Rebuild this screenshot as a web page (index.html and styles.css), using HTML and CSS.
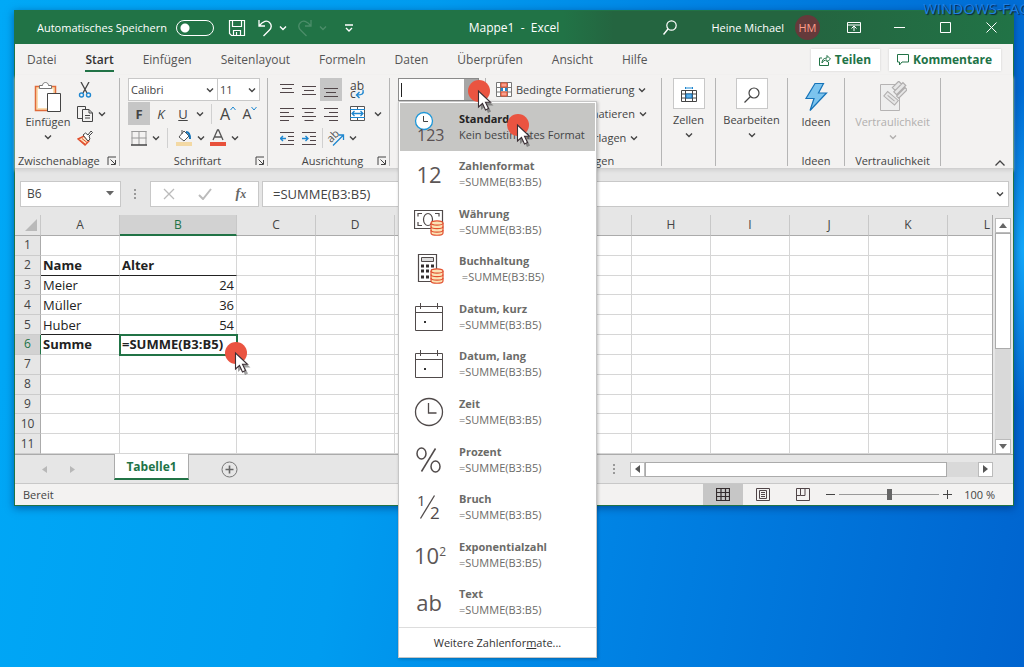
FILE: index.html
```html
<!DOCTYPE html>
<html lang="de">
	<head>
		<meta charset="utf-8">
		<title>Mappe1 - Excel</title>
		<link rel="stylesheet" href="styles.css">
	</head>
	<body>
		<svg class="defs" width="0" height="0">
			<symbol id="chev" viewBox="0 0 8 6"><path d="M1 1.500 4 4.500 7 1.500" fill="none" stroke="currentColor" stroke-width="1.400"/></symbol>
			<symbol id="launch" viewBox="0 0 10 10"><path d="M1 9V1h8M3.500 3.500 8 8M8.500 4v4.500H4" fill="none" stroke="currentColor"/></symbol>
			<symbol id="pointer" viewBox="0 0 28 36">
				<circle cx="11" cy="11" r="11" fill="#ea5441"/>
				<path d="M11 12v16l4-3.500 3 6.500 3-1.500-3-6h5.500z" fill="#444" opacity=".5" transform="translate(2 2)"/>
				<path d="M10.500 11v16l4-3.500 3 6.500 3-1.500-3-6.200h5z" fill="#fff" stroke="#3b2f35" stroke-width="1.100"/>
			</symbol>
			<symbol id="coins" viewBox="0 0 14 16">
				<g fill="#fbe3b5" stroke="#e2502f" stroke-width="1.200">
					<path d="M1 3v10c0 3 12 3 12 0V3"/>
					<ellipse cx="7" cy="3" rx="6" ry="2.200"/>
					<path d="M1 6.500c0 2.800 12 2.800 12 0M1 10c0 2.800 12 2.800 12 0" fill="none"/>
				</g>
			</symbol>
			<symbol id="cal" viewBox="0 0 30 30"><path d="M1.500 4.500h27v24h-27zM1.500 10.500h27M6.500 1v6M23.500 1v6" fill="none" stroke="#504a4a"/><path d="M10 19h2v2h-2z" fill="#333"/></symbol>
		</svg>

		<div class="watermark">WINDOWS-FAQ</div>
		<div class="window">
			<div class="titlebar">
				<div class="title-left">
					<label class="autosave"><span>Automatisches Speichern</span><input type="checkbox"></label>
					<button class="tbtn" aria-label="Speichern"><svg width="18" height="18"><path d="M1.500 1.500h15v15h-13l-2-2zM4.500 1.500v6h9v-6M5.500 16.500v-5h7v5M8.500 13v3" fill="none" stroke="currentColor" stroke-width="1.200"/></svg></button>
					<button class="tbtn undo" aria-label="Rückgängig"><svg width="16" height="18"><path d="M2 1v6h6M2 7C6 2 10 1 12.500 3.500S14.500 9 12 11.500L6.500 17" fill="none" stroke="currentColor" stroke-width="1.300"/></svg><svg width="8" height="6"><use href="#chev"/></svg></button>
					<button class="tbtn redo" aria-label="Wiederholen"><svg width="16" height="18"><path d="M14 1v6H8M14 7C10 2 6 1 3.500 3.500S1.500 9 4 11.500L9.500 17" fill="none" stroke="currentColor" stroke-width="1.300"/></svg><svg width="8" height="6"><use href="#chev"/></svg></button>
					<button class="tbtn customize" aria-label="Anpassen"><svg width="8" height="8"><path d="M0 1h8M1 4l3 3 3-3" fill="none" stroke="currentColor" stroke-width="1.300"/></svg></button>
				</div>
				<div class="title">Mappe1&nbsp; -&nbsp; Excel</div>
				<div class="title-right">
					<button class="tbtn search" aria-label="Suchen"><svg width="14" height="15"><circle cx="8.500" cy="5.500" r="4.700" fill="none" stroke="currentColor" stroke-width="1.200"/><path d="M5 9 .500 14.500" stroke="currentColor" stroke-width="1.400"/></svg></button>
					<span>Heine Michael</span>
					<span class="avatar">HM</span>
					<button class="tbtn ribbon-opt" aria-label="Menüband"><svg width="14" height="11"><path d="M.500.500h13v10H.500zM.500 3h13M7 9V4.500M4.500 6.500 7 4l2.500 2.500" fill="none" stroke="currentColor"/></svg></button>
					<button class="wbtn" aria-label="Minimieren"><svg width="11" height="11"><path d="M0 5.500h11" stroke="currentColor"/></svg></button>
					<button class="wbtn" aria-label="Maximieren"><svg width="11" height="11"><path d="M.500.500h10v10H.500z" fill="none" stroke="currentColor"/></svg></button>
					<button class="wbtn" aria-label="Schließen"><svg width="11" height="11"><path d="M.500.500l10 10M10.500.500l-10 10" stroke="currentColor"/></svg></button>
				</div>
			</div>

			<nav class="tabs">
				<a href="#">Datei</a>
				<a href="#" class="active">Start</a>
				<a href="#">Einfügen</a>
				<a href="#">Seitenlayout</a>
				<a href="#">Formeln</a>
				<a href="#">Daten</a>
				<a href="#">Überprüfen</a>
				<a href="#">Ansicht</a>
				<a href="#">Hilfe</a>
				<button class="share first"><svg width="12" height="12"><path d="M3 4H.500v7.500h9V8M3 9c0-3 1.500-5 5-5V1.500L11.500 5 8 8V6C5.500 6 4 7 3 9z" fill="none" stroke="currentColor"/></svg>Teilen</button>
				<button class="share"><svg width="12" height="12"><path d="M.500.500h11v7.500H5l-2.500 3V8h-2z" fill="none" stroke="currentColor"/></svg>Kommentare</button>
			</nav>

			<div class="ribbon">
				<div class="group clipboard">
					<div class="body">
						<button class="big">
							<svg width="28" height="32">
								<path d="M1.500 5.500h20v24h-20z" fill="#fbdcae" stroke="#e06a3a" stroke-width="1.500"/>
								<path d="M4 8h15v19H4z" fill="#fdfdfd"/>
								<path d="M5.500 7.500v-3h3c0-4 6-4 6 0h3v3z" fill="#fff" stroke="#777"/>
								<path d="M13.500 12.500h13v18h-13z" fill="#fff" stroke="#444"/>
							</svg>
							<span>Einfügen</span>
							<svg width="8" height="6"><use href="#chev"/></svg>
						</button>
						<div class="stack">
							<button aria-label="Ausschneiden"><svg width="16" height="16"><path d="M4 0l6 11M12 0 6 11" stroke="#444" stroke-width="1.300"/><circle cx="4.500" cy="13" r="2" fill="none" stroke="#1e87d0" stroke-width="1.400"/><circle cx="11.500" cy="13" r="2" fill="none" stroke="#1e87d0" stroke-width="1.400"/></svg></button>
							<button aria-label="Kopieren"><svg width="16" height="16"><path d="M5 12.500H.500V.500h8V3M5.500 3.500H12l3.500 3.500v8.500h-10zM12 3.500V7h3.500M8 9.500h5M8 12h5" fill="none" stroke="#444"/></svg><svg width="8" height="6"><use href="#chev"/></svg></button>
							<button aria-label="Format übertragen"><svg width="16" height="16"><path d="M1 9l6-3 5 5-4 4z" fill="#fde0bd" stroke="#e2502f" stroke-width="1.400"/><path d="M3 10l5 4M5 8.500l5 4" stroke="#e2502f"/><path d="M6 5l2.500-2L11 5l3-4 1.500 1.500L12 6l1 3-2 2z" fill="#fff" stroke="#444"/></svg></button>
						</div>
					</div>
					<div class="caption">Zwischenablage<svg class="launch" width="10" height="10"><use href="#launch"/></svg></div>
				</div>

				<div class="group font">
					<div class="body rows">
						<div class="row">
							<div class="combo family"><select aria-label="Schriftart"><option>Calibri</option></select><svg width="8" height="6"><use href="#chev"/></svg></div>
							<div class="combo size"><select aria-label="Schriftgrad"><option>11</option></select><svg width="8" height="6"><use href="#chev"/></svg></div>
						</div>
						<div class="row">
							<button class="cell on"><b>F</b></button>
							<button class="cell"><i>K</i></button>
							<button class="cell"><u>U</u></button>
							<button class="drop" aria-label="Unterstreichung"><svg width="8" height="6"><use href="#chev"/></svg></button>
							<span class="vline"></span>
							<button class="cell grow" aria-label="Schrift vergrößern">A<svg width="6" height="5"><path d="M.500 4 3 1l2.500 3" fill="none" stroke="#1e87d0"/></svg></button>
							<button class="cell shrink" aria-label="Schrift verkleinern">A<svg width="6" height="5"><path d="M.500 1 3 4l2.500-3" fill="none" stroke="#1e87d0"/></svg></button>
						</div>
						<div class="row">
							<button class="cell" aria-label="Rahmen"><svg width="16" height="16"><path d="M.500 1.500h15M.500 8h15M1 1v14M8 1v14M15 1v14" fill="none" stroke="#999"/><path d="M0 15h16" stroke="#444" stroke-width="1.500"/></svg></button>
							<button class="drop" aria-label="Rahmenart"><svg width="8" height="6"><use href="#chev"/></svg></button>
							<span class="vline"></span>
							<button class="cell" aria-label="Füllfarbe"><svg width="16" height="16"><path d="M8 1 3 7l5 4 5-5zM6 4V0" fill="#fff" stroke="#555"/><path d="M10 2c3 0 4 2 4 7" fill="none" stroke="#1673b8" stroke-width="2"/><path d="M0 12h16v4H0z" fill="#f3d9a4"/></svg></button>
							<button class="drop" aria-label="Füllfarben"><svg width="8" height="6"><use href="#chev"/></svg></button>
							<button class="cell" aria-label="Schriftfarbe"><svg width="16" height="17"><path d="M3 11 7.500 1h1L13 11M4.500 8h7" fill="none" stroke="#555" stroke-width="1.300"/><path d="M0 13h16v4H0z" fill="#e8513b"/></svg></button>
							<button class="drop" aria-label="Schriftfarben"><svg width="8" height="6"><use href="#chev"/></svg></button>
						</div>
					</div>
					<div class="caption">Schriftart<svg class="launch" width="10" height="10"><use href="#launch"/></svg></div>
				</div>

				<div class="group align">
					<div class="body rows">
						<div class="row">
							<button class="cell" aria-label="Oben"><svg width="14" height="14"><path d="M0 1.500h14M2 5.500h10M0 9.500h14" stroke="#504548"/></svg></button>
							<button class="cell" aria-label="Mitte"><svg width="14" height="14"><path d="M0 3.500h14M2 7.500h10M0 11.500h14" stroke="#504548"/></svg></button>
							<button class="cell on" aria-label="Unten"><svg width="14" height="14"><path d="M0 5.500h14M2 9.500h10M0 13.500h14" stroke="#504548"/></svg></button>
							<button class="wide" aria-label="Textumbruch"><svg width="16" height="18"><text x="1" y="9" font-size="12" fill="#444">ab</text><text x="1" y="17" font-size="12" fill="#444">c</text><path d="M14 9c1 4-1 5-6 5M10.500 11 7.500 14l3 3" fill="none" stroke="#1e87d0" stroke-width="1.400"/></svg></button>
						</div>
						<div class="row">
							<button class="cell" aria-label="Linksbündig"><svg width="14" height="14"><path d="M0 1.500h14M0 5.500h9M0 9.500h14M0 13.500h9" stroke="#504548"/></svg></button>
							<button class="cell" aria-label="Zentriert"><svg width="14" height="14"><path d="M0 1.500h14M2.500 5.500h9M0 9.500h14M2.500 13.500h9" stroke="#504548"/></svg></button>
							<button class="cell" aria-label="Rechtsbündig"><svg width="14" height="14"><path d="M0 1.500h14M5 5.500h9M0 9.500h14M5 13.500h9" stroke="#504548"/></svg></button>
							<button class="wide" aria-label="Verbinden"><svg width="15" height="15"><path d="M.500.500h14v14H.500zM7.500 0v4M7.500 11v4" fill="#fff" stroke="#555"/><path d="M0 3.500h15M0 11.500h15" stroke="#1e87d0"/><path d="M2 7.500h11M4.500 5 2 7.500 4.500 10M10.500 5 13 7.500 10.500 10" fill="none" stroke="#1e87d0" stroke-width="1.300"/></svg></button>
							<button class="drop" aria-label="Verbindungsart"><svg width="8" height="6"><use href="#chev"/></svg></button>
						</div>
						<div class="row">
							<button class="cell" aria-label="Einzug verkleinern"><svg width="14" height="14"><path d="M0 1.500h14M8 5.500h6M8 9.500h6M0 13.500h14" stroke="#504548"/><path d="M0 7.500h6M3 5 .500 7.500 3 10" fill="none" stroke="#1e87d0" stroke-width="1.400"/></svg></button>
							<button class="cell" aria-label="Einzug vergrößern"><svg width="14" height="14"><path d="M0 1.500h14M8 5.500h6M8 9.500h6M0 13.500h14" stroke="#504548"/><path d="M0 7.500h6M3.500 5 6 7.500 3.500 10" fill="none" stroke="#1e87d0" stroke-width="1.400"/></svg></button>
							<span class="vline"></span>
							<button class="cell" aria-label="Ausrichtung"><svg width="18" height="18"><text x="0" y="11" font-size="11" fill="#555" transform="rotate(-45 6 8)">ab</text><path d="M6 16.500 16 6.500M11.500 6H16.500V11" fill="none" stroke="#1e87d0" stroke-width="1.300"/></svg></button>
							<button class="drop" aria-label="Ausrichtungen"><svg width="8" height="6"><use href="#chev"/></svg></button>
						</div>
					</div>
					<div class="caption">Ausrichtung<svg class="launch" width="10" height="10"><use href="#launch"/></svg></div>
				</div>

				<div class="group number">
					<div class="format-box">
						<input type="text" aria-label="Zahlenformat"><span class="caret"></span><button aria-label="Zahlenformate"></button>
						<svg class="pointer" width="28" height="36"><use href="#pointer"/></svg>
						<div class="menu">
							<div class="menu-items">
								<button class="item hover">
									<svg width="30" height="32"><circle cx="10" cy="10" r="8.500" fill="#fff" stroke="#1e97d8" stroke-width="1.300"/><path d="M9.500 5v5.500H14" fill="none" stroke="#444"/><text x="3" y="30" font-size="16" fill="#5a5152">123</text></svg>
									<span class="lines"><b>Standard</b><span>Kein bestimmtes Format</span></span>
									<svg class="pointer" width="28" height="36"><use href="#pointer"/></svg>
								</button>
								<button class="item"><span class="glyph">12</span><span class="lines"><b>Zahlenformat</b><span>=SUMME(B3:B5)</span></span></button>
								<button class="item">
									<svg width="30" height="30"><path d="M.500 3.500h28v18H.500zM4 9.500v-3h4M4 15v3.500h4M21 6.500h4v3" fill="none" stroke="#504a4a" stroke-width="1.200"/><ellipse cx="14" cy="12.500" rx="4.500" ry="6" fill="none" stroke="#504a4a" stroke-width="1.200"/><use href="#coins" x="16" y="13" width="14" height="16"/></svg>
									<span class="lines"><b>Währung</b><span>=SUMME(B3:B5)</span></span>
								</button>
								<button class="item">
									<svg width="30" height="30"><path d="M4.500.500h18v27h-18z" fill="none" stroke="#504a4a" stroke-width="1.200"/><path d="M7.500 3.500h12v4h-12z" fill="#ddd" stroke="#504a4a"/><path d="M7 12h13M7 17h13M7 23h8" stroke="#332e2e" stroke-width="3" stroke-dasharray="3 2"/><use href="#coins" x="16" y="14" width="14" height="16"/></svg>
									<span class="lines"><b>Buchhaltung</b><span>&nbsp;=SUMME(B3:B5)</span></span>
								</button>
								<button class="item"><svg width="30" height="30"><use href="#cal"/></svg><span class="lines"><b>Datum, kurz</b><span>=SUMME(B3:B5)</span></span></button>
								<button class="item"><svg width="30" height="30"><use href="#cal"/></svg><span class="lines"><b>Datum, lang</b><span>=SUMME(B3:B5)</span></span></button>
								<button class="item"><svg width="30" height="30"><circle cx="15" cy="15" r="13.500" fill="none" stroke="#504a4a" stroke-width="1.300"/><path d="M14.500 6v10h8" fill="none" stroke="#504a4a" stroke-width="1.300"/></svg><span class="lines"><b>Zeit</b><span>=SUMME(B3:B5)</span></span></button>
								<button class="item"><svg width="30" height="30"><g fill="none" stroke="#504a4a" stroke-width="1.500"><ellipse cx="7.500" cy="8.500" rx="4.500" ry="5.500"/><ellipse cx="21.500" cy="21.500" rx="4.500" ry="5.500"/><path d="M21.500 3.500l-14 23"/></g></svg><span class="lines"><b>Prozent</b><span>=SUMME(B3:B5)</span></span></button>
								<button class="item"><svg width="30" height="30"><text x="3" y="14" font-size="15" fill="#504a4a">1</text><text x="16" y="27" font-size="17" fill="#504a4a">2</text><path d="M20.500 3.500l-14 23" stroke="#504a4a" stroke-width="1.300"/></svg><span class="lines"><b>Bruch</b><span>=SUMME(B3:B5)</span></span></button>
								<button class="item"><span class="glyph">10<sup>2</sup></span><span class="lines"><b>Exponentialzahl</b><span>=SUMME(B3:B5)</span></span></button>
								<button class="item"><span class="glyph">ab</span><span class="lines"><b>Text</b><span>=SUMME(B3:B5)</span></span></button>
							</div>
							<button class="more">Weitere Zahlenfor<u>m</u>ate...</button>
						</div>
					</div>
				</div>

				<div class="group styles">
					<div class="body rows">
						<button class="row"><svg width="16" height="16"><path d="M.500.500h15v14H.500zM0 5.500h16M0 10h16M4.500 0v15M11.500 0v15" fill="#fff" stroke="#777"/><path d="M5 1h6v4H5zM5 10h6v4H5z" fill="#f7a08e" stroke="#e2502f"/><path d="M5 6h2v3H5zM9 6h2v3H9z" fill="#1e87d0"/></svg>Bedingte Formatierung<svg width="8" height="6"><use href="#chev"/></svg></button>
						<button class="row"><svg width="16" height="16"><path d="M.500.500h15v14H.500zM0 5.500h16M0 10h16M5.500 0v15M10.500 0v15" fill="#fff" stroke="#777"/></svg>Als Tabelle formatieren<svg width="8" height="6"><use href="#chev"/></svg></button>
						<button class="row"><svg width="16" height="16"><path d="M.500.500h15v14H.500zM0 5.500h16" fill="#fff" stroke="#777"/></svg>Zellenformatvorlagen<svg width="8" height="6"><use href="#chev"/></svg></button>
					</div>
					<div class="caption">Formatvorlagen</div>
				</div>

				<div class="group cells">
					<button class="big">
						<span class="tile"><svg width="16" height="16"><path d="M.500 3.500h15v11H.500zM0 7h16M0 11h16M4.500 3v12M11.500 3v12" fill="#fff" stroke="#444"/><path d="M5 7h6v4H5z" fill="#5fb2ea" stroke="#1673b8"/><path d="M4.500 0v2M11.500 0v2M4.500 1h7" stroke="#1e87d0"/></svg></span>
						<span>Zellen</span>
						<svg width="8" height="6"><use href="#chev"/></svg>
					</button>
				</div>
				<div class="group editing">
					<button class="big">
						<span class="tile"><svg width="16" height="16"><circle cx="10" cy="6" r="5" fill="none" stroke="#444" stroke-width="1.200"/><path d="M6.500 9.500.500 15.500" stroke="#444" stroke-width="1.300"/></svg></span>
						<span>Bearbeiten</span>
						<svg width="8" height="6"><use href="#chev"/></svg>
					</button>
				</div>
				<div class="group ideas">
					<div class="body">
						<button class="big">
							<svg width="24" height="32"><path d="M11 2.500h8.500l-5 9.500h8L6 29.500l4-12H2z" fill="#7cc4ee" stroke="#1673b8" stroke-width="1.200"/></svg>
							<span>Ideen</span>
						</button>
					</div>
					<div class="caption">Ideen</div>
				</div>
				<div class="group privacy">
					<div class="body">
						<button class="big" disabled>
							<svg width="28" height="32"><path d="M1.500 3.500h19v26h-19z" fill="#eee" stroke="#b5b3b3"/><g transform="rotate(40 11 17)" fill="#e6e6e6" stroke="#b0aeae"><path d="M5 13.500h14v6H5z"/><path d="M7.500 16.500h9"/></g><g transform="rotate(-45 19 8)" fill="#e6e6e6" stroke="#b0aeae" stroke-width="1.200"><path d="M14 7h13v4H14zM16 3h9v4h-9zM13 12h12v3H13z"/></g></svg>
							<span>Vertraulichkeit</span>
							<svg width="8" height="6"><use href="#chev"/></svg>
						</button>
					</div>
					<div class="caption">Vertraulichkeit</div>
				</div>
				<button class="collapse" aria-label="Menüband reduzieren"><svg width="10" height="6"><path d="M.500 5.500 5 1l4.500 4.500" fill="none" stroke="#444" stroke-width="1.300"/></svg></button>
			</div>

			<div class="formula-row">
				<div class="name-box"><input type="text" value="B6" aria-label="Namenfeld"><svg width="8" height="5"><path d="M0 0h8L4 4.500z" fill="#666"/></svg></div>
				<svg class="dots" width="2" height="12"><path d="M1 1v10" stroke="#999" stroke-width="2" stroke-dasharray="2 2"/></svg>
				<div class="fx-box">
					<button aria-label="Abbrechen"><svg width="12" height="12"><path d="M1 1l10 10M11 1 1 11" stroke="#bbb" stroke-width="1.300"/></svg></button>
					<button aria-label="Eingeben"><svg width="14" height="12"><path d="M1 7l4 4L13 1" fill="none" stroke="#bbb" stroke-width="2"/></svg></button>
					<button class="fx">f<small>x</small></button>
				</div>
				<div class="formula"><input type="text" value="=SUMME(B3:B5)" aria-label="Formel"><svg width="8" height="6"><use href="#chev"/></svg></div>
			</div>

			<div class="sheet">
				<div class="grid">
					<table>
						<colgroup><col class="c-head"><col><col class="c-b"><col span="10"></colgroup>
						<thead><tr><th class="corner"><svg width="12" height="12"><path d="M12 0v12H0z" fill="#b9b9b9"/></svg></th><th>A</th><th class="sel">B</th><th>C</th><th>D</th><th>E</th><th>F</th><th>G</th><th>H</th><th>I</th><th>J</th><th>K</th><th>L</th></tr></thead>
						<tbody>
							<tr><th>1</th><td></td><td></td></tr>
							<tr class="head"><th>2</th><td>Name</td><td>Alter</td></tr>
							<tr><th>3</th><td>Meier</td><td class="num">24</td></tr>
							<tr><th>4</th><td>Müller</td><td class="num">36</td></tr>
							<tr><th>5</th><td class="line">Huber</td><td class="num">54</td></tr>
							<tr class="sum"><th class="sel">6</th><td>Summe</td><td class="edit">=SUMME(B3:B5)<svg class="pointer" width="28" height="36"><use href="#pointer"/></svg></td></tr>
							<tr><th>7</th><td></td><td></td></tr>
							<tr><th>8</th><td></td><td></td></tr>
							<tr><th>9</th><td></td><td></td></tr>
							<tr><th>10</th><td></td><td></td></tr>
							<tr><th>11</th><td></td><td></td></tr>
						</tbody>
					</table>
				</div>
				<div class="vscroll">
					<button aria-label="Nach oben"><svg width="8" height="5"><path d="M4 0l4 5H0z" fill="#666"/></svg></button>
					<span class="thumb"></span>
					<span class="track"></span>
					<button aria-label="Nach unten"><svg width="8" height="5"><path d="M0 0h8L4 5z" fill="#666"/></svg></button>
				</div>
			</div>

			<div class="sheet-tabs">
				<button class="nav" aria-label="Vorheriges Blatt"><svg width="5" height="7"><path d="M5 0v7L0 3.500z" fill="#b8b8b8"/></svg></button>
				<button class="nav" aria-label="Nächstes Blatt"><svg width="5" height="7"><path d="M0 0v7l5-3.500z" fill="#b8b8b8"/></svg></button>
				<button class="sheet-tab">Tabelle1</button>
				<button class="add" aria-label="Neues Blatt"><svg width="17" height="17"><circle cx="8.500" cy="8.500" r="7.500" fill="none" stroke="#777"/><path d="M8.500 4.500v8M4.500 8.500h8" stroke="#666" stroke-width="1.600"/></svg></button>
				<svg class="dots" width="2" height="12"><path d="M1 1v10" stroke="#999" stroke-width="2" stroke-dasharray="2 2"/></svg>
				<div class="hscroll">
					<button aria-label="Nach links"><svg width="5" height="8"><path d="M5 0v8L0 4z" fill="#555"/></svg></button>
					<span class="thumb"></span>
					<span class="track"></span>
					<button aria-label="Nach rechts"><svg width="5" height="8"><path d="M0 0v8l5-4z" fill="#555"/></svg></button>
				</div>
			</div>

			<div class="status">
				<span>Bereit</span>
				<div class="views">
					<button class="on" aria-label="Normal"><svg width="14" height="13"><path d="M.500.500h13v12H.500zM0 4.500h14M0 8.500h14M5 0v13M9.500 0v13" fill="none" stroke="#332b2d" stroke-width="1.200"/></svg></button>
					<button aria-label="Seitenlayout"><svg width="14" height="13"><path d="M.500.500h13v12H.500zM3.500 2.500h7v8h-7zM5 4.500h4M5 6.500h4M5 8.500h4" fill="none" stroke="#504548"/></svg></button>
					<button aria-label="Umbruchvorschau"><svg width="14" height="13"><path d="M.500.500h13v12H.500zM4.500.500v7H.500M4.500 7.500H9v-7" fill="none" stroke="#504548"/></svg></button>
				</div>
				<div class="zoom">
					<button aria-label="Verkleinern"><svg width="9" height="9"><path d="M0 4.500h9" stroke="#444"/></svg></button>
					<input type="range" min="0" max="100" value="50" aria-label="Zoom">
					<button aria-label="Vergrößern"><svg width="9" height="9"><path d="M0 4.500h9M4.500 0v9" stroke="#444"/></svg></button>
					<span>100 %</span>
				</div>
			</div>
		</div>

		<script type="text/javascript">
			// fill every row up to column L
			var rows = document.querySelectorAll('.grid tbody tr');
			for(var i=0;i < rows.length;i++){
				while(rows[i].cells.length < 13){
					rows[i].insertCell();
				}
			}
		</script>
	</body>
</html>
```
FILE: styles.css
```css
*{
	box-sizing: border-box;
}
html{
	height: 100%;
}
body{
	margin: 0;
	min-height: 100%;
	padding: 10px 10px 0 14px;
	overflow: hidden;
	background:
		radial-gradient(ellipse 60px 160px at 100% 250px, #14a8fa, transparent),
		linear-gradient(100deg, #00a9f7 0%, #009cf0 38%, #0083e4 62%, #0064cf 100%);
	font-family: "Open Sans", "Noto Sans", sans-serif;
	font-size: 12px;
	line-height: 16px;
	color: #444;
}
button, input, select{
	font: inherit;
	color: inherit;
	margin: 0;
	padding: 0;
	border: 0;
	background: none;
	outline: none;
}
button{
	display: flex;
	align-items: center;
	justify-content: center;
}
svg{
	display: block;
	flex: none;
}
.defs{
	position: absolute;
}
.watermark{
	position: absolute;
	z-index: 5;
	top: 0;
	left: 923px;
	right: 0;
	overflow: hidden;
	white-space: nowrap;
	font-size: 15px;
	font-variant: small-caps;
	color: #1d7fe6;
	text-shadow: 1px 1px 1px #0a2340;
}
.window{
	border: 1px solid #217346;
	background: #f3f2f1;
	box-shadow: 0 2px 8px rgba(0, 30, 90, .5);
}
.pointer{
	position: absolute;
	z-index: 3;
	pointer-events: none;
}

/* title bar */
.titlebar{
	display: grid;
	grid-template-columns: 1fr auto 1fr;
	align-items: center;
	height: 33px;
	background: linear-gradient(90deg, #217346 55%, #246540 60%, #246540 80%, #217346 100%);
	color: #fff;
	font-size: 11px;
}
.title{
	font-size: 12px;
}
.title-left, .title-right{
	display: flex;
	align-items: center;
}
.title-left{
	padding-left: 22px;
	gap: 14px;
}
.title-right{
	justify-content: flex-end;
	padding-right: 16px;
}
.autosave{
	display: flex;
	align-items: center;
	gap: 9px;
}
.autosave input{
	appearance: none;
	width: 38px;
	height: 16px;
	border: 1px solid #fff;
	border-radius: 8px;
	background: radial-gradient(circle at 8px 7px, #fff 4px, transparent 5px);
}
.tbtn{
	gap: 6px;
}
.undo{
	margin-left: -3px;
}
.redo{
	margin-left: -4px;
	color: #4b8d69;
}
.customize{
	margin-left: 4px;
}
.search{
	margin-right: 34px;
}
.avatar{
	width: 25px;
	height: 25px;
	margin: 0 27px 0 11px;
	border-radius: 50%;
	background: #653a3b;
	color: #ff9d8a;
	text-align: center;
	line-height: 25px;
}
.ribbon-opt{
	margin-right: 33px;
}
.wbtn + .wbtn{
	margin-left: 35px;
}

/* ribbon tabs */
.tabs{
	display: flex;
	align-items: center;
	height: 31px;
	padding: 0 12px;
	gap: 29px;
}
.tabs a{
	color: #555;
	text-decoration: none;
	line-height: 20px;
	border-bottom: 2px solid transparent;
	border-top: 2px solid transparent;
}
.tabs .active{
	color: #333;
	font-weight: 600;
	border-bottom-color: #217346;
}
.share{
	height: 22px;
	padding: 0 9px 0 8px;
	gap: 4px;
	background: #fff;
	box-shadow: 0 0 2px #ccc;
	color: #217346;
	font-weight: bold;
}
.share + .share{
	margin-left: -20px;
}
.share.first{
	margin-left: auto;
}

/* ribbon */
.ribbon{
	display: flex;
	position: relative;
	height: 94px;
	padding-top: 3px;
	border-bottom: 1px solid #d0d0d0;
	box-shadow: 0 2px 3px #d4d4d4;
	font-size: 11px;
}
.group{
	position: relative;
	height: 88px;
	border-right: 1px solid #b5b5b5;
}
.body{
	height: 73px;
}
.caption{
	position: relative;
	text-align: center;
	line-height: 20px;
	white-space: nowrap;
}
.launch{
	position: absolute;
	right: 2px;
	bottom: 5px;
}
.clipboard{
	width: 105px;
}
.clipboard .body{
	display: flex;
}
.clipboard .caption{
	text-align: left;
	padding-left: 3px;
}
.font{
	width: 148px;
	padding-left: 8px;
}
.align{
	width: 122px;
	padding-left: 8px;
}
.number{
	width: 96px;
	padding-left: 8px;
}
.styles{
	width: 176px;
	padding-left: 10px;
}
.styles .caption{
	margin-left: -10px;
}
.cells{
	width: 54px;
}
.editing{
	width: 72px;
}
.ideas{
	width: 57px;
}
.privacy{
	width: 96px;
}
.big{
	flex-direction: column;
	justify-content: flex-start;
	width: 100%;
	padding-top: 3px;
	line-height: 18px;
}
.clipboard .big{
	width: 62px;
	padding-left: 4px;
}
.big svg:last-child{
	margin-top: 3px;
}
.big:disabled{
	color: #b1afae;
}
.tile{
	display: grid;
	place-items: center;
	width: 32px;
	height: 31px;
	margin-top: -3px;
	margin-bottom: 2px;
	border: 1px solid #c8c8c8;
	background: #fff;
}
.stack{
	display: grid;
	grid-template-rows: repeat(3, 24px);
}
.stack button{
	justify-content: flex-start;
	gap: 5px;
}
.rows{
	display: grid;
	grid-template-rows: repeat(3, 23px);
	row-gap: 1px;
}
.row{
	display: flex;
	align-items: center;
}
.styles .row{
	justify-content: flex-start;
	gap: 4px;
	white-space: nowrap;
}
.cell{
	width: 22px;
	height: 23px;
}
.cell.on{
	background: #c6c6c6;
}
.cell b, .cell i, .cell u{
	font-size: 13px;
}
.wide{
	width: 30px;
}
.drop{
	width: 12px;
	height: 23px;
}
.vline{
	width: 1px;
	height: 20px;
	margin: 0 5px;
	background: #d0d0d0;
}
.align .vline{
	margin: 0 2px;
}
.grow{
	font-size: 16px;
}
.shrink{
	font-size: 14px;
}
.grow svg, .shrink svg{
	align-self: flex-start;
	margin-top: 4px;
}
.combo{
	position: relative;
	height: 23px;
	border: 1px solid #c8c8c8;
	background: #fff;
}
.combo select{
	appearance: none;
	width: 100%;
	height: 21px;
	padding: 0 2px;
}
.combo svg{
	position: absolute;
	top: 8px;
	right: 3px;
	pointer-events: none;
}
.family{
	width: 90px;
}
.size{
	width: 43px;
	margin-left: -1px;
}
.collapse{
	margin: auto 8px 2px auto;
}

/* number format list */
.format-box{
	display: flex;
	position: relative;
	width: 81px;
	height: 23px;
	border: 1px solid #8a8a8a;
	background: #fff;
}
.format-box input{
	flex: 1;
	min-width: 0;
}
.format-box > button{
	width: 14px;
	background: #a6a6a6;
}
.caret{
	position: absolute;
	left: 2px;
	top: 4px;
	width: 1px;
	height: 14px;
	background: #222;
}
.format-box > .pointer{
	left: 69px;
	top: 1px;
}
.menu{
	position: absolute;
	z-index: 2;
	left: -1px;
	top: 22px;
	width: 199px;
	border: 1px solid #c6c6c6;
	background: #fff;
	box-shadow: 1px 1px 3px rgba(0, 0, 0, .25);
}
.menu-items{
	display: grid;
	grid-template-rows: repeat(11, 1fr);
	height: 525px;
	padding: 1px;
}
.item{
	position: relative;
	justify-content: flex-start;
	padding-left: 14px;
	gap: 15px;
	text-align: left;
	color: #6b6b68;
}
.item.hover{
	background: #c6c6c4;
	color: #444;
}
.item.hover b{
	color: #222;
}
.item .pointer{
	left: 107px;
	top: 11px;
}
.lines{
	display: grid;
	white-space: nowrap;
}
.glyph{
	width: 30px;
	text-align: center;
	font-size: 22px;
	line-height: 30px;
	color: #5c5656;
	white-space: nowrap;
}
.glyph sup{
	font-size: 12px;
	line-height: 0;
}
.more{
	display: block;
	width: 100%;
	height: 30px;
	border-top: 1px solid #ddd;
	text-align: center;
	color: #333;
}

/* formula bar */
.formula-row{
	display: flex;
	align-items: center;
	height: 46px;
	padding: 3px 4px 0 5px;
	background: #e6e6e6;
}
.name-box, .fx-box, .formula{
	display: flex;
	align-items: center;
	height: 26px;
	border: 1px solid #c8c8c8;
	background: #fff;
}
.name-box{
	width: 101px;
	padding: 0 6px;
}
.name-box input, .formula input{
	flex: 1;
	min-width: 0;
}
.formula-row .dots{
	margin: 0 14px 0 13px;
}
.fx-box{
	width: 109px;
	justify-content: space-around;
	margin-right: 3px;
}
.fx{
	font-family: "Liberation Serif", serif;
	font-style: italic;
	font-weight: bold;
	font-size: 14px;
	color: #666;
}
.fx small{
	font-size: 12px;
}
.formula{
	flex: 1;
	padding: 0 4px 0 10px;
	font-size: 13px;
}

/* sheet */
.sheet{
	display: flex;
	height: 240px;
	background: #e6e6e6;
	border-bottom: 1px solid #ababab;
}
.grid{
	flex: 1;
	min-width: 0;
	overflow: hidden;
	border-right: 1px solid #ababab;
	background: #fff;
}
.grid table{
	table-layout: fixed;
	width: 1012px;
	height: 239px;
	border-collapse: separate;
	border-spacing: 0;
	font-size: 13px;
	line-height: 16px;
	color: #222;
}
.grid col{
	width: 79px;
}
.grid .c-head{
	width: 26px;
}
.grid .c-b{
	width: 117px;
}
.grid th{
	padding: 0;
	background: #e6e6e6;
	border-right: 1px solid #ababab;
	border-bottom: 1px solid #ccc;
	font-size: 12px;
	font-weight: normal;
	color: #444;
}
.grid thead th{
	height: 21px;
	border-bottom-color: #ababab;
	border-right-color: #c8c8c8;
}
.grid .corner svg{
	margin-left: 10px;
}
.grid thead .sel{
	background: #d2d2d2;
	border-bottom: 2px solid #217346;
	color: #217346;
}
.grid tbody .sel{
	background: #d2d2d2;
	border-right: 1px solid #217346;
	color: #217346;
}
.grid td{
	padding: 0 2px;
	border-right: 1px solid #d6d6d6;
	border-bottom: 1px solid #d6d6d6;
	white-space: nowrap;
}
.grid .head td, .grid .sum td{
	font-weight: bold;
}
.grid .head td:nth-child(-n+3), .grid .line{
	border-bottom-color: #222;
}
.grid .num{
	text-align: right;
}
.grid .edit{
	position: relative;
	outline: 2px solid #217346;
	outline-offset: -1px;
}
.edit .pointer{
	left: 105px;
	top: 7px;
}
.vscroll{
	display: flex;
	flex-direction: column;
	width: 20px;
	padding: 3px 2px 0;
}
.vscroll button{
	height: 15px;
	background: #fff;
	border: 1px solid #bbb;
}
.vscroll .thumb{
	height: 116px;
	background: #fff;
	border: 1px solid #ababab;
}
.track{
	flex: 1;
	background: #d9d9d9;
}

/* sheet tabs */
.sheet-tabs{
	display: flex;
	align-items: center;
	height: 29px;
	padding-right: 20px;
	background: #e6e6e6;
	border-bottom: 1px solid #c8c8c8;
}
.nav{
	width: 28px;
}
.nav:first-child{
	margin-left: 15px;
}
.sheet-tab{
	align-self: flex-start;
	width: 75px;
	height: 26px;
	margin: -1px 32px 0 28px;
	padding-top: 2px;
	background: #fff;
	border: 1px solid #ababab;
	border-top: 0;
	border-bottom: 2px solid #217346;
	color: #217346;
	font-weight: bold;
}
.sheet-tabs .dots{
	margin: 0 15px 0 auto;
}
.hscroll{
	display: flex;
	width: 363px;
	height: 15px;
}
.hscroll button{
	width: 15px;
	background: #fff;
	border: 1px solid #bbb;
}
.hscroll .thumb{
	width: 302px;
	background: #fff;
	border: 1px solid #ababab;
}

/* status bar */
.status{
	display: flex;
	align-items: center;
	height: 21px;
	padding: 0 18px 0 8px;
	font-size: 11px;
}
.views{
	display: flex;
	margin-left: auto;
}
.views button{
	width: 40px;
	height: 21px;
}
.views .on{
	background: #c6c6c6;
}
.zoom{
	display: flex;
	align-items: center;
	gap: 4px;
	margin-left: 3px;
}
.zoom span{
	margin-left: 8px;
}
.zoom input{
	appearance: none;
	width: 100px;
	height: 12px;
	background: linear-gradient(#999, #999) center / 100% 1px no-repeat;
}
.zoom input::-webkit-slider-thumb{
	appearance: none;
	width: 5px;
	height: 11px;
	background: #666;
}
```
